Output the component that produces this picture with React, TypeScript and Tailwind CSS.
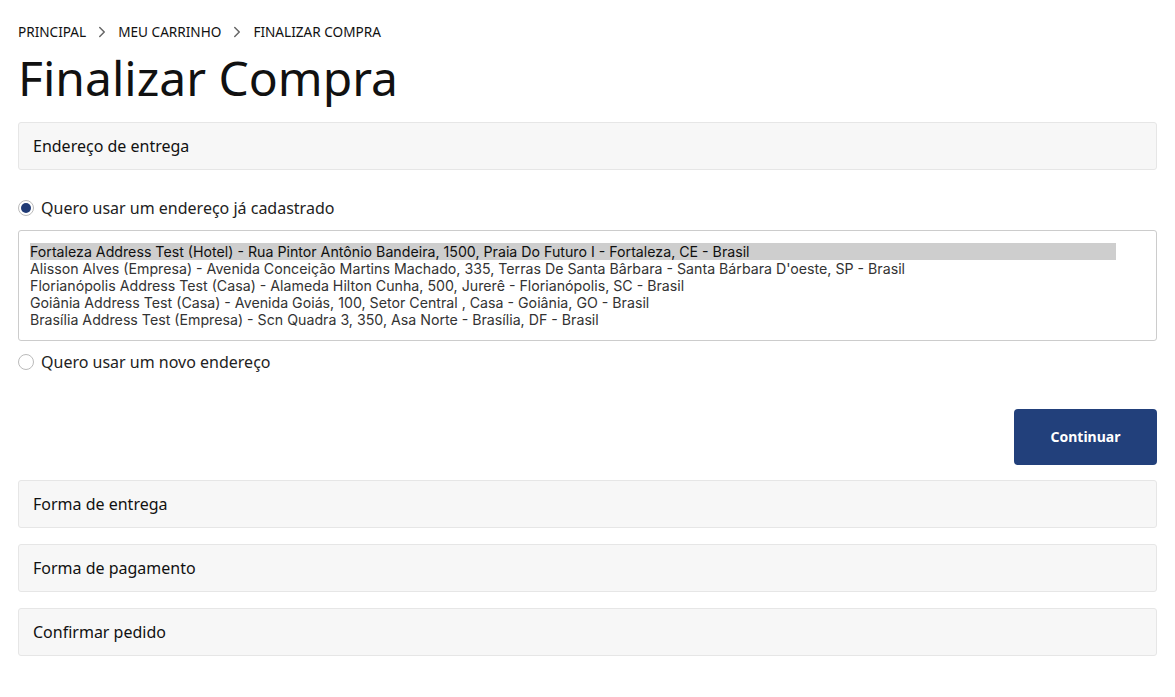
import React from "react";
import { ChevronRight } from "lucide-react";

const enderecos = [
  "Fortaleza Address Test (Hotel) - Rua Pintor Antônio Bandeira, 1500, Praia Do Futuro I - Fortaleza, CE - Brasil",
  "Alisson Alves (Empresa) - Avenida Conceição Martins Machado, 335, Terras De Santa Bârbara - Santa Bárbara D'oeste, SP - Brasil",
  "Florianópolis Address Test (Casa) - Alameda Hilton Cunha, 500, Jurerê - Florianópolis, SC - Brasil",
  "Goiânia Address Test (Casa) - Avenida Goiás, 100, Setor Central , Casa - Goiânia, GO - Brasil",
  "Brasília Address Test (Empresa) - Scn Quadra 3, 350, Asa Norte - Brasília, DF - Brasil",
];

function Secao({ titulo }: { titulo: string }) {
  return (
    <div className="h-12 flex items-center px-[14px] bg-[#f7f7f7] border border-[#e6e6e6] rounded-[3px] text-base text-[#111]">
      {titulo}
    </div>
  );
}

function Radio({ checked, label }: { checked?: boolean; label: string }) {
  return (
    <label className="flex items-center gap-[7px] text-base text-[#222]">
      <span className="w-4 h-4 rounded-full border border-[#bbb] flex items-center justify-center bg-white">
        {checked && <span className="w-[10px] h-[10px] rounded-full bg-[#1f3a75]" />}
      </span>
      {label}
    </label>
  );
}

export default function App() {
  return (
    <div className="min-h-screen bg-white px-[18px] pt-[22px] font-['Noto_Sans',sans-serif]">
      {/* Breadcrumb */}
      <nav className="flex items-center text-[13.6px] text-[#111] h-[20px]">
        <span>PRINCIPAL</span>
        <ChevronRight className="mx-[7px] text-[#666]" size={18} strokeWidth={2} />
        <span>MEU CARRINHO</span>
        <ChevronRight className="mx-[7px] text-[#666]" size={18} strokeWidth={2} />
        <span>FINALIZAR COMPRA</span>
      </nav>
      <h1 className="text-[48px] leading-[56px] text-[#111] mt-[8px] mb-[16px]">Finalizar Compra</h1>

      <Secao titulo="Endereço de entrega" />

      <div className="mt-[26px]">
        <Radio checked label="Quero usar um endereço já cadastrado" />
      </div>

      {/* lista de endereços cadastrados */}
      <select
        size={5}
        defaultValue="0"
        className="mt-[10px] block w-full h-[111px] border border-[#ccc] rounded-[3px] pl-[11px] pr-[40px] pt-[12px] text-[14.2px] text-[#333] overflow-hidden outline-none font-['Inter',sans-serif]"
      >
        {enderecos.map((e, i) => (
          <option key={i} value={String(i)} className="py-0">
            {e}
          </option>
        ))}
      </select>

      <div className="mt-[9px]">
        <Radio label="Quero usar um novo endereço" />
      </div>

      <div className="flex justify-end mt-[35px] mb-[15px]">
        <button className="w-[143px] h-[56px] rounded-[4px] bg-[#22407b] text-white text-sm font-bold">
          Continuar
        </button>
      </div>

      <div className="flex flex-col gap-4">
        <Secao titulo="Forma de entrega" />
        <Secao titulo="Forma de pagamento" />
        <Secao titulo="Confirmar pedido" />
      </div>
    </div>
  );
}
